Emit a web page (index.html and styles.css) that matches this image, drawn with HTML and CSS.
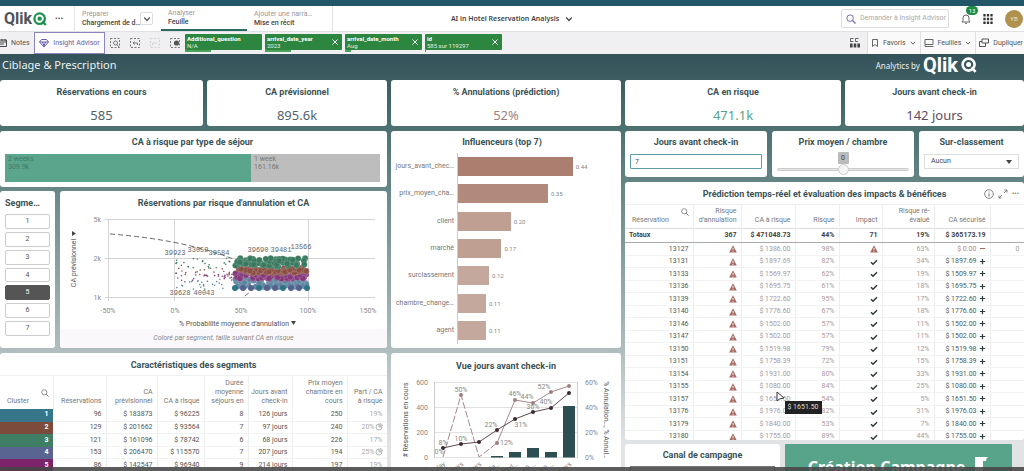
FILE: index.html
```html
<!DOCTYPE html>
<html lang="fr">
<head>
<meta charset="utf-8">
<title>AI in Hotel Reservation Analysis</title>
<link rel="stylesheet" href="styles.css">
</head>
<body>
<svg class="defs" aria-hidden="true">
  <symbol id="warn" viewBox="0 0 8 8"><path d="M4 0.3 7.8 7.5H0.2Z" fill="#a5675f"/><path d="M4 2.8v2.4M4 5.9v.9" stroke="#fff" stroke-width=".9"/></symbol>
  <symbol id="check" viewBox="0 0 8 8"><path d="M1 4.2 3 6.2 7 2.2" fill="none" stroke="#2f3a3c" stroke-width="1.5"/></symbol>
  <symbol id="plus" viewBox="0 0 8 8"><path d="M4 1V7M1 4H7" stroke="#2f3a3c" stroke-width="1.4"/></symbol>
  <symbol id="minus" viewBox="0 0 8 8"><path d="M1 4H7" stroke="#a5675f" stroke-width="1.2"/></symbol>
  <symbol id="lens" viewBox="0 0 8 8"><circle cx="3.3" cy="3.3" r="2.6" fill="none" stroke="currentColor" stroke-width=".8"/><path d="M5.2 5.2 7.6 7.6" stroke="currentColor" stroke-width="1"/></symbol>
  <symbol id="chev" viewBox="0 0 8 8"><path d="M1.2 2.5 4 5.5 6.8 2.5" fill="none" stroke="currentColor" stroke-width="1.2"/></symbol>
  <symbol id="close" viewBox="0 0 8 8"><path d="M1.5 1.5 6.5 6.5M6.5 1.5 1.5 6.5" stroke="currentColor" stroke-width="1"/></symbol>
  <symbol id="qmark" viewBox="0 0 16 16"><circle cx="7.6" cy="7.6" r="6" fill="none" stroke="currentColor" stroke-width="2.6"/><circle cx="7.6" cy="7.6" r="2.5" fill="currentColor"/><path d="M10.5 10.5 14.6 14.8" stroke="currentColor" stroke-width="2.6"/></symbol>
</svg>
<div class="page">
  <div class="strip"></div>
  <header class="topbar">
    <div class="top-left">
      <div class="brand"><span class="brand-name">Qlik</span><svg class="brand-mark"><use href="#qmark"/></svg><button class="more" aria-label="Menu">•••</button></div>
      <nav class="tabs">
        <a class="tab first" href="#"><small>Préparer</small><b>Chargement de d…</b></a>
        <button class="tab-drop" aria-label="Ouvrir"><svg class="ico8"><use href="#chev"/></svg></button>
        <a class="tab active" href="#"><small>Analyser</small><b>Feuille</b></a>
        <a class="tab last" href="#"><small>Ajouter une narra…</small><b>Mise en récit</b></a>
      </nav>
    </div>
    <button class="app-title">AI in Hotel Reservation Analysis <svg class="ico8"><use href="#chev"/></svg></button>
    <div class="top-right">
      <label class="search"><svg class="ico10"><use href="#lens"/></svg><input type="text" aria-label="Recherche" placeholder="Demander à Insight Advisor"></label>
      <button class="bell" aria-label="Notifications"><svg class="ico10" viewBox="0 0 10 10"><path d="M1 8H9L8 6.500V4A3 3 0 0 0 2 4V6.500ZM4 9.300H6" fill="none" stroke="#555" stroke-width=".9"/></svg><span class="badge">13</span></button>
      <button class="apps" aria-label="Applications"><svg class="ico10" viewBox="0 0 10 10"><path d="M1.500 0V10M5 0V10M8.500 0V10" stroke="#333" stroke-width="2.300" stroke-dasharray="2.600 1.100"/></svg></button>
      <span class="avatar">YB</span>
    </div>
  </header>
  <div class="toolbar">
    <button class="notes"><svg class="ico8" viewBox="0 0 8 8"><path d="M0 1H6.500V7.500H0M0 3H6M0 5H4M2 0V2M5 0V2" fill="none" stroke="#444"/></svg>Notes</button>
    <button class="advisor"><svg class="ico10" viewBox="0 0 10 10"><path d="M2.500 1.500H7.500L9.500 4 5 9 .5 4ZM.5 4H9.500M3.500 4 5 8 6.500 4" fill="none" stroke="#6b5bb0" stroke-width="1"/></svg>Insight Advisor</button>
    <div class="sel-tools">
      <button aria-label="Rechercher"><svg class="ico10" viewBox="0 0 10 10"><path d="M.5.5H9.500V9.500H.5Z" fill="none" stroke="#777" stroke-dasharray="2 1.500"/><circle cx="5.500" cy="5" r="2" fill="none" stroke="#777"/><path d="M7 6.500 9 9" stroke="#777"/></svg></button>
      <button aria-label="Reculer"><svg class="ico10" viewBox="0 0 10 10"><path d="M.5.5H9.500V9.500H.5Z" fill="none" stroke="#777" stroke-dasharray="2 1.500"/><path d="M7.500 7V5H3M4.500 3.500 3 5 4.500 6.500" fill="none" stroke="#777"/></svg></button>
      <button class="off" aria-label="Avancer"><svg class="ico10" viewBox="0 0 10 10"><path d="M.5.5H9.500V9.500H.5Z" fill="none" stroke="#777" stroke-dasharray="2 1.500"/><path d="M2.500 7V5H7" fill="none" stroke="#777"/></svg></button>
      <button aria-label="Effacer"><svg class="ico10" viewBox="0 0 10 10"><path d="M.5.5H9.500V9.500H.5Z" fill="none" stroke="#777" stroke-dasharray="2 1.500"/><circle cx="6.500" cy="5" r="2.600" fill="#555"/></svg></button>
    </div>
    <div class="chips">
      <div class="chip"><div><b>Additional_question</b><span>N/A</span></div><i style="width:34%"></i></div>
      <div class="chip"><div><b>arrival_date_year</b><span>2023</span></div><button aria-label="Retirer"><svg class="ico8"><use href="#close"/></svg></button><i style="width:34%"></i></div>
      <div class="chip"><div><b>arrival_date_month</b><span>Aug</span></div><button aria-label="Retirer"><svg class="ico8"><use href="#close"/></svg></button><i style="width:8%"></i></div>
      <div class="chip"><div><b>id</b><span>585 sur 119297</span></div><button aria-label="Retirer"><svg class="ico8"><use href="#close"/></svg></button><i style="width:1%"></i></div>
    </div>
    <button class="sel-view" aria-label="Sélections"><svg class="ico10" viewBox="0 0 10 10"><path d="M.5 4V.5H3.500M.5 3.500H3.500M5.500.5H8.500M5.500.5V3.500H8" fill="none" stroke="#555" stroke-width=".9"/><path d="M0 7.500H10" stroke="#444" stroke-width="4" stroke-dasharray="2.600 1.100"/></svg></button>
    <div class="sheet-tools">
      <button><svg class="ico8" viewBox="0 0 8 8"><path d="M1.500.5H6.500V7.500L4 5.500 1.500 7.500Z" fill="none" stroke="#666"/></svg>Favoris<svg class="ico6"><use href="#chev"/></svg></button>
      <button><svg class="ico10" viewBox="0 0 10 10"><path d="M1 1.500H9V6.500H1ZM1 6.500V8.500H6M4 8.500H9.500" fill="none" stroke="#666"/></svg>Feuilles<svg class="ico6"><use href="#chev"/></svg></button>
      <button><svg class="ico10" viewBox="0 0 10 10"><path d="M3 1H9.500V5H3ZM3 3.500H.5V8.500H6.500V5" fill="none" stroke="#555"/></svg>Dupliquer</button>
    </div>
  </div>
  <main class="sheet">
    <div class="sheet-head"><h1>Ciblage &amp; Prescription</h1><div class="by">Analytics by <strong>Qlik</strong><svg class="by-mark"><use href="#qmark"/></svg></div></div>
    <div class="board">
      <div class="col left">
        <div class="kpis k-left">
          <section class="card kpi"><h2>Réservations en cours</h2><p>585</p></section>
          <section class="card kpi"><h2>CA prévisionnel</h2><p>895.6k</p></section>
        </div>
        <section class="card stay"><h2>CA à risque par type de séjour</h2>
          <div class="stack"><div class="s1"><span>2 weeks</span><span>309.9k</span></div><div class="s2"><span>1 week</span><span>161.16k</span></div></div>
        </section>
        <div class="mid-row">
          <section class="card segs"><h2>Segme…</h2>
            <div class="seg-list"><button>1</button><button>2</button><button>3</button><button>4</button><button class="on">5</button><button>6</button><button>7</button></div>
          </section>
          <section class="card scatter"><h2>Réservations par risque d'annulation et CA</h2>
            <svg class="chart" viewBox="0 0 327 118" role="img" aria-label="Réservations par risque d'annulation et CA">
              <path d="M45 8.500H315M45 47.500H315M45 86.500H315M48.500 8V90M114.500 8V90M248.500 8V90" stroke="#d4d4d4" fill="none"/>
              <path d="M50 23Q118 28 168 46T183 86" fill="none" stroke="#666" stroke-dasharray="5 3"/>
              <g id="dots"></g>
              <g class="ax end"><text x="41" y="11">5k</text><text x="41" y="50">2k</text><text x="41" y="89">1k</text></g>
              <g class="ax mid"><text x="48" y="102">-50%</text><text x="115" y="102">0%</text><text x="181" y="102">50%</text><text x="248" y="102">100%</text><text x="308" y="102">150%</text></g>
              <g class="ax mono mid"><text x="115" y="44">39923</text><text x="138" y="41">33059</text><text x="159" y="44">39584</text><text x="198" y="41">39690</text><text x="221" y="41">39481</text><text x="241" y="38">13566</text><text x="120" y="84">39628</text><text x="144" y="84">40043</text></g>
              <g class="ax dark mid"><text x="174" y="115">% Probabilité moyenne d'annulation</text><text transform="translate(16 52) rotate(-90)">CA prévisionnel</text></g>
              <path d="M231 110H236L233.500 114ZM12 20V25L16 22.500Z" fill="#444"/>
            </svg>
            <p class="foot">Coloré par segment, taille suivant CA en risque</p>
          </section>
        </div>
        <section class="card clusters"><h2>Caractéristiques des segments</h2>
          <table>
            <colgroup><col style="width:53px"><col style="width:53px"><col style="width:51px"><col style="width:47px"><col style="width:44px"><col style="width:44px"><col style="width:55px"><col style="width:40px"></colgroup>
            <thead><tr><th class="first"><svg class="ico8"><use href="#lens"/></svg>Cluster</th><th>Réservations</th><th>CA prévisionnel</th><th>CA à risque</th><th>Durée moyenne séjours en</th><th>Jours avant check-in</th><th>Prix moyen chambre en cours</th><th>Part / CA à risque</th></tr></thead>
            <tbody>
              <tr><td class="c1">1</td><td>96</td><td>$ 183873</td><td>$ 96225</td><td>8</td><td>126 jours</td><td>250</td><td class="dim">19%</td></tr>
              <tr><td class="c2">2</td><td>129</td><td>$ 201662</td><td>$ 93564</td><td>7</td><td>97 jours</td><td>240</td><td class="dim">20%<svg class="ico8" viewBox="0 0 8 8"><path d="M4 4V1A3 3 0 1 0 7 4ZM5 3V.5A3 3 0 0 1 7.500 3Z" fill="none" stroke="#999" stroke-width=".7"/></svg></td></tr>
              <tr><td class="c3">3</td><td>121</td><td>$ 161096</td><td>$ 78742</td><td>6</td><td>68 jours</td><td>226</td><td class="dim">17%</td></tr>
              <tr><td class="c4">4</td><td>153</td><td>$ 206470</td><td>$ 115570</td><td>7</td><td>207 jours</td><td>194</td><td class="dim">25%<svg class="ico8" viewBox="0 0 8 8"><path d="M4 4V1A3 3 0 1 0 7 4ZM5 3V.5A3 3 0 0 1 7.500 3Z" fill="none" stroke="#999" stroke-width=".7"/></svg></td></tr>
              <tr><td class="c5">5</td><td>86</td><td>$ 142547</td><td>$ 96940</td><td>9</td><td>214 jours</td><td>197</td><td class="dim">19%</td></tr>
            </tbody>
          </table>
        </section>
      </div>
      <div class="col center">
        <section class="card kpi"><h2>% Annulations (prédiction)</h2><p class="rose">52%</p></section>
        <section class="card influ"><h2>Influenceurs (top 7)</h2>
          <div class="bars">
            <div><b>jours_avant_chec…</b><span><i class="b1" style="width:74%"></i>0.44</span></div>
            <div><b>prix_moyen_cha…</b><span><i class="b2" style="width:58%"></i>0.35</span></div>
            <div><b>client</b><span><i class="b3" style="width:34%"></i>0.20</span></div>
            <div><b>marché</b><span><i class="b3" style="width:28%"></i>0.17</span></div>
            <div><b>surclassement</b><span><i class="b4" style="width:20%"></i>0.12</span></div>
            <div><b>chambre_change…</b><span><i class="b4" style="width:18%"></i>0.11</span></div>
            <div><b>agent</b><span><i class="b4" style="width:18%"></i>0.11</span></div>
          </div>
        </section>
        <section class="card combo"><h2>Vue jours avant check-in</h2>
          <svg class="chart" viewBox="0 0 230 120" role="img" aria-label="Vue jours avant check-in">
            <path d="M43 8.500H187M43 33.500H187M43 58.500H187M43 83.500H187" stroke="#e2e2e2"/><path d="M43.500 8V84M186.500 8V84" stroke="#ccc"/>
            <path d="M100 82h12v1.500h-12zM118 78h12v5.500h-12zM136 74h12v9.500h-12zM154 78h12v5.500h-12zM172 32h12v51.500h-12z" fill="#2d4f53"/>
            <path d="M52 83 70 21 88 83 106 69" fill="none" stroke="#a58a8c" stroke-dasharray="7 2"/><path d="M106 69 124 26 142 29 160 18 178 12" fill="none" stroke="#a58a8c"/>
            <path d="M52 74 70 70 88 68 106 56 124 45 142 38 160 34 178 19" fill="none" stroke="#5d4a4e"/>
            <g fill="#a0807f"><circle cx="70" cy="21" r="2"/><circle cx="106" cy="69" r="2"/><circle cx="124" cy="26" r="2"/><circle cx="142" cy="29" r="2"/><circle cx="160" cy="18" r="2"/><circle cx="178" cy="12" r="2"/></g>
            <g fill="#3c2a30"><circle cx="52" cy="74" r="2"/><circle cx="70" cy="70" r="2"/><circle cx="88" cy="68" r="2"/><circle cx="106" cy="56" r="2"/><circle cx="124" cy="45" r="2"/><circle cx="142" cy="38" r="2"/><circle cx="160" cy="34" r="2"/><circle cx="178" cy="19" r="2"/></g>
            <g class="ax end"><text x="37" y="11">600</text><text x="37" y="36">400</text><text x="37" y="61">200</text><text x="37" y="86">0</text></g>
            <g class="ax"><text x="194" y="11">60%</text><text x="194" y="36">40%</text><text x="194" y="61">20%</text><text x="194" y="86">0%</text><text x="109" y="71">12%</text></g>
            <g class="ax mid"><text x="70" y="18">50%</text><text x="52" y="71">8%</text><text x="48" y="80">0%</text><text x="70" y="67">10%</text><text x="100" y="53">22%</text><text x="130" y="53">31%</text><text x="124" y="22">46%</text><text x="136" y="25">44%</text><text x="142" y="35">36%</text><text x="155" y="30">40%</text><text x="153" y="15">52%</text></g>
            <g class="ax end"><text transform="translate(55 91) rotate(-35)">1 day</text><text transform="translate(73 91) rotate(-35)">3 days</text><text transform="translate(91 91) rotate(-35)">7 days</text><text transform="translate(109 91) rotate(-35)">14 da…</text><text transform="translate(127 91) rotate(-35)">30 d…</text><text transform="translate(145 91) rotate(-35)">60 …</text><text transform="translate(163 91) rotate(-35)">90 …</text><text transform="translate(181 91) rotate(-35)">+ days</text></g>
            <g class="ax dark mid"><text transform="translate(17 46) rotate(-90)"># Réservations en cours</text><text transform="translate(213 46) rotate(90)">% Annulation…, % Annul…</text></g>
          </svg>
        </section>
      </div>
      <div class="col right">
        <div class="kpis k-right">
          <section class="card kpi"><h2>CA en risque</h2><p class="green">471.1k</p></section>
          <section class="card kpi"><h2>Jours avant check-in</h2><p class="plum">142 jours</p></section>
        </div>
        <div class="inputs">
          <section class="card field"><h2><label for="days">Jours avant check-in</label></h2><input id="days" type="text" value="7"></section>
          <section class="card field slide"><h2><label for="price">Prix moyen / chambre</label></h2><output for="price">0</output><input id="price" type="range" min="-100" max="100" value="0"></section>
          <section class="card field"><h2><label for="up">Sur-classement</label></h2><div class="select"><select id="up"><option>Aucun</option></select></div></section>
        </div>
        <section class="card predict"><h2>Prédiction temps-réel et évaluation des impacts &amp; bénéfices</h2>
          <div class="tools"><button aria-label="Infos"><svg class="ico10" viewBox="0 0 10 10"><circle cx="5" cy="5" r="4.300" fill="none" stroke="#777" stroke-width=".9"/><path d="M5 4.300V7.500M5 2.500V3.400" stroke="#777"/></svg></button><button aria-label="Plein écran"><svg class="ico10" viewBox="0 0 10 10"><path d="M6 4 9 1M6.500 1H9V3.500M4 6 1 9M1 6.500V9H3.500" fill="none" stroke="#777" stroke-width=".9"/></svg></button><button aria-label="Options">•••</button></div>
          <table>
            <colgroup><col style="width:68px"><col style="width:48px"><col style="width:54px"><col style="width:44px"><col style="width:43px"><col style="width:52px"><col style="width:56px"><col style="width:34px"></colgroup>
            <thead><tr><th class="first"><svg class="ico8"><use href="#lens"/></svg>Réservation</th><th>Risque d'annulation</th><th>CA à risque</th><th>Risque</th><th>Impact</th><th>Risque ré-évalué</th><th>CA sécurisé</th><th></th></tr>
            <tr class="total"><td>Totaux</td><td>367</td><td>$ 471048.73</td><td>44%</td><td>71</td><td>19%</td><td>$ 365173.19</td><td></td></tr></thead>
            <tbody id="rows"></tbody>
          </table>
        </section>
        <div class="actions">
          <section class="card canal"><h2><label for="canal">Canal de campagne</label></h2><select id="canal"><option></option></select></section>
          <button class="create">Création Campagne <svg viewBox="0 0 18 18"><path d="M4 0H17Q15 1 15 4H12V15Q11 18 8 18H1Q4 16 4 12Z" fill="#fff"/></svg></button>
        </div>
      </div>
    </div>
  </main>
  <div class="player"></div>
</div>
<script src="app.js"></script>
</body>
</html>
```

FILE: styles.css
```css
* { box-sizing: border-box; }
body { margin: 0; font-family: Roboto, "Noto Sans", sans-serif; font-size: 7px; line-height: 9px; color: #555; }
h1, h2, p { margin: 0; }
button, input, select { font: inherit; color: inherit; margin: 0; padding: 0; border: 0; background: none; }
button { display: inline-flex; align-items: center; justify-content: center; }
a { color: inherit; text-decoration: none; }
svg { flex: none; }
.defs { position: absolute; width: 0; height: 0; }
.ico6 { width: 6px; height: 6px; }
.ico8 { width: 8px; height: 8px; }
.ico10 { width: 10px; height: 10px; }

.page { position: relative; height: 100vh; display: flex; flex-direction: column; overflow: hidden; }
.strip { flex: none; height: 6px; background: #24566a; }

.topbar { flex: none; height: 26px; display: grid; grid-template-columns: 1fr auto 1fr; background: #fff; border-bottom: 1px solid #e0e0e2; }
.top-left { display: flex; align-items: stretch; }
.brand { width: 75px; display: flex; align-items: center; padding-left: 4px; border-right: 1px solid #e4e4e4; }
.brand-name { font: 700 16px/20px Roboto, sans-serif; color: #505356; }
.brand-mark { width: 14px; height: 14px; color: #1f9150; margin-left: 1px; }
.more { font-size: 8px; margin-left: 8px; color: #444; }
.tabs { display: flex; align-items: stretch; }
.tab { display: flex; flex-direction: column; justify-content: center; padding: 0 7px; }
.tab small { font-size: 7px; color: #999; }
.tab b { font-weight: 500; color: #444; white-space: nowrap; }
.tab.first { width: 65px; padding-right: 0; }
.tab-drop { width: 13px; height: 13px; align-self: center; border: 1px solid #ddd; border-radius: 2px; margin-right: 8px; }
.tab.active { width: 86px; border-bottom: 2px solid #2c6b62; }
.tab.last { width: 86px; border-right: 1px solid #e4e4e4; }
.app-title { font: 600 7px/9px "Noto Sans", sans-serif; color: #444; gap: 6px; white-space: nowrap; }
.top-right { display: flex; align-items: center; justify-content: flex-end; gap: 12px; padding-right: 1px; }
.search { width: 108px; height: 19px; border: 1px solid #ddd; border-radius: 2px; display: flex; align-items: center; gap: 4px; padding: 0 2px 0 4px; color: #7b6faa; }
.search input { flex: 1; min-width: 0; }
.search input::placeholder { color: #aaa; }
.bell { position: relative; }
.badge { position: absolute; left: 5px; top: -8px; height: 9px; width: 12px; border-radius: 5px; background: #1d8a42; color: #fff; font-size: 6px; line-height: 9px; text-align: center; }
.avatar { width: 18px; height: 18px; border-radius: 50%; background: #b0914e; color: #f1e3c0; font-size: 6px; line-height: 18px; text-align: center; }

.toolbar { flex: none; height: 22px; display: flex; align-items: center; background: #f0f0f2; }
.notes { width: 34px; gap: 3px; justify-content: flex-start; flex: none; }
.advisor { width: 71px; height: 22px; flex: none; border: 1px solid #8e83bd; background: #fcfcff; color: #6e62a0; gap: 4px; white-space: nowrap; }
.sel-tools { display: flex; gap: 10px; padding: 0 5px; }
.off { opacity: .25; }
.chips { display: flex; gap: 3px; align-self: stretch; padding-top: 2px; }
.chip { position: relative; width: 77px; height: 16px; padding: 0 3px 0 2px; display: flex; align-items: center; justify-content: space-between; background: #2d863f; color: #fff; border-radius: 1px; font-size: 6px; line-height: 7px; }
.chip b, .chip span { display: block; white-space: nowrap; }
.chip span { color: #e1f0e3; }
.chip i { position: absolute; left: 0; bottom: -2px; height: 2px; background: #4da35e; }
.sel-view { margin-left: auto; width: 24px; }
.sheet-tools { display: flex; align-self: stretch; justify-content: space-between; background: #fafafa; width: 157px; border-left: 1px solid #ddd; padding-right: 1px; }
.sheet-tools button { gap: 4px; padding: 0 3px; white-space: nowrap; }
.sheet-tools button + button { border-left: 1px solid #e0e0e0; }
.sheet-tools button:last-child { padding-right: 0; }

.sheet { flex: 1; min-height: 0; overflow: hidden; background: linear-gradient(#34525a 0, #4b706f 70px, #6a8989 140px, #adbbbd 290px, #e2e3e5 390px); }
.sheet-head { height: 26px; display: flex; align-items: center; justify-content: space-between; padding: 0 47px 4px 2px; color: #e9f1f1; }
.sheet-head h1 { font: 400 11px/14px "Noto Sans", sans-serif; }
.by { display: flex; align-items: center; gap: 3px; font-family: "Noto Sans", sans-serif; font-size: 8px; }
.by strong { font: 700 20px/20px Roboto, sans-serif; color: #fff; }
.by-mark { width: 16px; height: 16px; color: #fff; }

.board { display: grid; grid-template-columns: minmax(0, 387fr) minmax(0, 230fr) minmax(0, 399fr); column-gap: 4px; align-items: start; }
.col { display: flex; flex-direction: column; gap: 5px; min-width: 0; }
.card { background: #fff; border-radius: 3px; min-width: 0; }
.card h2 { font: 700 9px/10px Roboto, sans-serif; color: #3b5357; text-align: center; white-space: nowrap; }
.kpis { display: grid; gap: 4px; }
.k-left { grid-template-columns: 203fr 180fr; }
.k-right { grid-template-columns: 216fr 179fr; }
.kpi { height: 46px; padding-top: 7px; text-align: center; }
.kpi p { font: 400 13px/18px "Noto Sans", sans-serif; padding-top: 9px; color: #536469; }
.kpi .rose { color: #a37f80; }
.kpi .green { color: #56a28a; }
.kpi .plum { color: #654b60; }

.stay { height: 56px; padding: 6px 7px 5px 5px; }
.stack { display: flex; height: 28px; margin-top: 7px; line-height: 8px; }
.stack div { padding: 1px 3px; flex-basis: 0; }
.stack span { display: block; }
.s1 { flex-grow: 248; background: #5ba58c; color: #3f7a69; }
.s2 { flex-grow: 127; background: #bdbdbd; color: #777; }

.mid-row { display: grid; grid-template-columns: 55fr 327fr; gap: 5px; margin-top: -1px; }
.segs { padding: 7px 5px 12px; display: flex; flex-direction: column; }
.segs h2 { text-align: left; }
.seg-list { flex: 1; display: flex; flex-direction: column; gap: 3px; padding-top: 6px; }
.seg-list button { flex: 1; border: 1px solid #ccc; border-radius: 2px; }
.seg-list .on { background: #555; border-color: #555; color: #fff; }
.scatter { padding-top: 7px; overflow: hidden; }
.chart { display: block; width: 100%; height: auto; }
.scatter .chart { margin-top: 3px; }
.ax text { font-size: 7px; fill: #888; }
.ax.mono text { font-family: "Liberation Mono", monospace; fill: #666; }
.ax.dark text { fill: #555; }
.end text { text-anchor: end; }
.mid text { text-anchor: middle; }
.foot { line-height: 19px; background: #faf8fa; text-align: center; font-style: italic; color: #888; }

table { width: 100%; table-layout: fixed; border-collapse: collapse; line-height: 9px; }
th { font-weight: 400; text-align: right; vertical-align: bottom; padding: 0 4px 3px 2px; color: #777; border-right: 1px solid #eee; }
td { text-align: right; padding: 0 4px; height: 12px; border-right: 1px solid #eee; border-bottom: 1px solid #f2f2f2; white-space: nowrap; }
tbody tr:nth-child(odd) td { height: 13px; }
th.first { text-align: left; padding-left: 7px; }
th.first svg { display: block; margin-left: auto; }
.clusters { padding-top: 7px; overflow: hidden; }
.clusters table { margin-top: 5px; }
.clusters th { height: 33px; border-top: 1px solid #f0f0f0; }
.clusters .dim { color: #aaa; }
.clusters td svg { vertical-align: middle; }
.clusters td[class^="c"] { color: #fff; font-weight: 700; border-color: transparent; }
.clusters .c1 { background: #37758a; }
.clusters .c2 { background: #7c4b3b; }
.clusters .c3 { background: #3d7e64; }
.clusters .c4 { background: #596590; }
.clusters .c5 { background: #7d2369; }

.influ { height: 217px; padding: 6px 8px 4px 0; display: flex; flex-direction: column; }
.bars { flex: 1; display: flex; flex-direction: column; margin-top: 6px; }
.bars div { flex: 1; display: flex; align-items: center; }
.bars b { width: 66px; padding-right: 3px; text-align: right; white-space: nowrap; font-weight: 400; color: #777; }
.bars span { flex: 1; align-self: stretch; display: flex; align-items: center; gap: 3px; border-left: 1px solid #ccc; color: #888; font-size: 6px; }
.bars i { height: 19px; }
.b1 { background: #ab7e70; }
.b2 { background: #b2897d; }
.b3 { background: #c09f93; }
.b4 { background: #c4a89e; }
.combo { padding-top: 8px; }
.combo .chart { margin-top: 3px; }

.inputs { display: grid; grid-template-columns: 142fr 142fr 105fr; gap: 5px; }
.field { height: 46px; padding: 6px 5px 0; }
.field input[type="text"] { display: block; width: 100%; height: 15px; margin-top: 7px; padding: 0 4px; border: 1px solid #5c9dac; border-radius: 1px; }
.slide { text-align: center; }
.slide output { display: block; width: 11px; height: 12px; margin: 5px auto 0; background: #bbb; color: #444; line-height: 12px; border-radius: 1px; }
.slide input { appearance: none; display: block; width: 100%; height: 11px; }
.slide input::-webkit-slider-runnable-track { height: 3px; background: #e4e4e4; border: 1px solid #ccc; border-radius: 2px; }
.slide input::-webkit-slider-thumb { appearance: none; width: 11px; height: 11px; margin-top: -5px; border-radius: 50%; background: #f4f4f4; border: 1px solid #ccc; }
.select { position: relative; margin-top: 7px; }
.select select { appearance: none; width: 100%; height: 15px; padding-left: 6px; border: 1px solid #ddd; color: #444; }
.select::after { content: ""; position: absolute; right: 7px; top: 6px; border: 3px solid transparent; border-top: 4px solid #444; }

.predict { position: relative; height: 258px; padding-top: 7px; overflow: hidden; }
.predict .tools { position: absolute; right: 2px; top: 4px; display: flex; align-items: center; gap: 4px; padding: 3px; background: #fff; color: #777; }
.predict table { margin-top: 5px; }
.predict th { height: 24px; border-top: 1px solid #f0f0f0; }
.total td { height: 14px; font-weight: 700; color: #444; border-top: 1px solid #ddd; border-bottom: 1px solid #aaa; }
.total td:first-child { text-align: left; }
#rows td svg { width: 8px; height: 8px; display: block; margin-left: auto; }
#rows .risk { color: #a99a9c; }
#rows .gain { color: #4c5c5e; }
#rows .loss { color: #b08a88; }
#rows .gain svg, #rows .loss svg { display: inline-block; width: 7px; height: 7px; vertical-align: middle; margin-left: 2px; }
.hovered { position: relative; overflow: visible; }
#rows .hovered .cursor { position: absolute; left: 34px; top: -2px; width: 9px; height: 12px; z-index: 2; }
.tip { position: absolute; left: 43px; top: 8px; width: 37px; height: 13px; background: #222; color: #ddd; line-height: 13px; text-align: center; z-index: 2; }

.actions { display: grid; grid-template-columns: 155fr 227fr 7fr; gap: 5px; margin-top: -1px; }
.canal { height: 60px; padding: 6px 5px 0; }
.canal select { display: block; width: 100%; height: 18px; margin-top: 6px; border: 1px solid #777; }
.create { height: 60px; background: #58a48b; color: #fff; font: 700 16px/20px "Noto Sans", sans-serif; gap: 6px; border-radius: 1px; align-items: flex-start; padding-top: 13px; white-space: nowrap; }
.create svg { width: 18px; height: 18px; }
.player { position: absolute; left: 0; right: 0; bottom: 0; height: 4px; background: rgba(70, 70, 70, .88); z-index: 5; }
```

FILE: app.js
```js
const rows = [
  ["13127", "1386.00", "98%", "63%", "0.00"], ["13131", "1897.69", "82%", "34%", "1897.69"],
  ["13133", "1569.97", "62%", "19%", "1509.97"], ["13136", "1695.75", "61%", "18%", "1695.75"],
  ["13139", "1722.60", "95%", "17%", "1722.60"], ["13140", "1776.60", "67%", "18%", "1776.60"],
  ["13146", "1502.00", "57%", "11%", "1502.00"], ["13147", "1502.00", "57%", "11%", "1502.00"],
  ["13150", "1519.98", "79%", "12%", "1519.98"], ["13151", "1758.39", "72%", "15%", "1758.39"],
  ["13154", "1931.00", "80%", "33%", "1931.00"], ["13155", "1080.00", "84%", "25%", "1080.00"],
  ["13157", "1651.50", "54%", "5%", "1651.50"], ["13176", "1976.03", "82%", "31%", "1976.03"],
  ["13179", "1840.00", "53%", "7%", "1840.00"], ["13180", "1755.00", "89%", "44%", "1755.00"]
];
const icon = name => `<svg><use href="#${name}"/></svg>`;
const hover = '<svg class="cursor" viewBox="0 0 9 12"><path d="M1 1V10L3.500 8 8 7Z" fill="#fff" stroke="#333"/></svg><span class="tip">$ 1651.50</span>';
document.getElementById("rows").innerHTML = rows.map(([id, ca, risk, next, gain], i) => {
  const hot = id === "13157";
  return `<tr><td>${id}</td><td>${icon("warn")}</td><td class="risk${hot ? " hovered" : ""}">$ ${ca}${hot ? hover : ""}</td><td class="risk">${risk}</td><td>${icon(i ? "check" : "warn")}</td><td class="risk">${next}</td><td class="${i ? "gain" : "loss"}">$ ${gain}${icon(i ? "plus" : "minus")}</td><td class="risk">${i ? "" : "0"}</td></tr>`;
}).join("");

// Seeded generator keeps the scatter identical on every load.
let seed = 11;
const rnd = () => (seed = (seed * 16807) % 2147483647) / 2147483647;
const bands = [["#39795f", 47, 56], ["#8b4f43", 57, 62], ["#85397c", 62, 68], ["#5f86a0", 68, 76]];
let dots = "";
for (const [color, top, bottom] of bands) {
  for (let i = 0; i < 22; i++) {
    dots += `<circle cx="${(116 + rnd() * 56).toFixed(1)}" cy="${(top + rnd() * (bottom - top + 3)).toFixed(1)}" r=".8" fill="${color}"/>`;
  }
}
for (const [color, top, bottom] of bands.slice().reverse()) {
  for (let i = 0; i < 75; i++) {
    dots += `<circle cx="${(175 + rnd() * 72).toFixed(1)}" cy="${(top + rnd() * (bottom - top)).toFixed(1)}" r="3" fill="${color}" stroke="#fff" stroke-width=".3" stroke-opacity=".5"/>`;
  }
}
for (let i = 0; i < 10; i++) {
  dots += `<circle cx="${175 + i * 8}" cy="77" r="3" fill="${i % 3 ? "#56608f" : "#2f7487"}"/>`;
}
document.getElementById("dots").innerHTML = dots;
```
